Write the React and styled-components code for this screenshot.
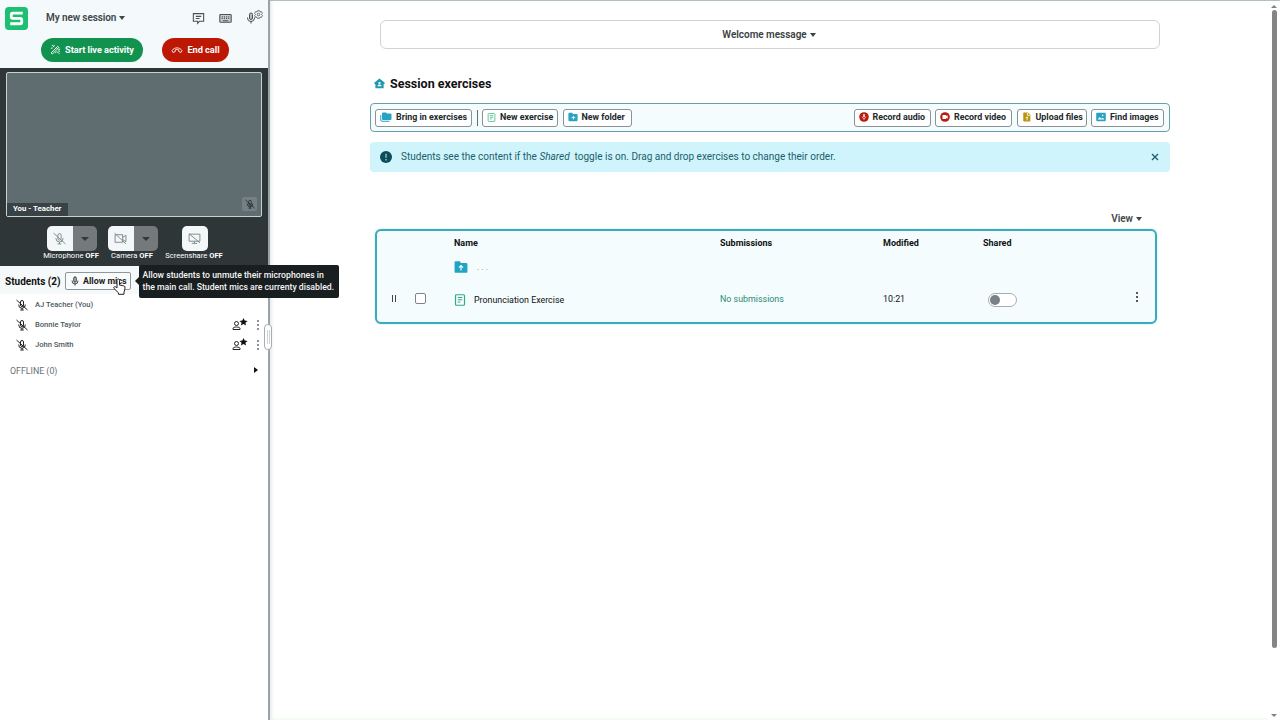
import React from 'react';
import styled, { createGlobalStyle } from 'styled-components';

const GlobalStyle = createGlobalStyle`
  * {
    box-sizing: border-box;
  }

  body {
    margin: 0;
    overflow: hidden;
    background: #fff;
    font-family: Roboto, "Liberation Sans", sans-serif;
    color: #111;
  }

  button {
    font-family: inherit;
    margin: 0;
  }

  svg {
    display: block;
    flex-shrink: 0;
  }
`;

const paths = {
  chat: <path d="M2.500 3h19v14h-7.500l-3.500 4v-4h-8zM7 8h10M7 12h7" />,
  keyboard: (
    <>
      <rect x="1.500" y="4.500" width="21" height="14.500" rx="1.5" fill="#c9cfd0" />
      <path d="M5 9h2M9 9h2M13 9h2M17 9h2M5 12h2M9 12h2M13 12h2M17 12h2M7 16h10" />
    </>
  ),
  mic: (
    <>
      <rect x="9" y="2" width="6" height="13" rx="3" fill="#b5bcbd" />
      <path d="M5 11v1a7 7 0 0 0 14 0v-1M12 19v4" />
    </>
  ),
  micOff: <path d="M12 3a3 3 0 0 0-3 3v6a3 3 0 0 0 6 0V6a3 3 0 0 0-3-3zM5.500 11v1a6.500 6.500 0 0 0 13 0v-1M12 18.500V22M8.500 22h7M1 2l22 20" />,
  gear: (
    <>
      <path d="M9 2h6l1 3 4-.5 2.500 5L20 12l2.500 2.500-2.500 5-4-.5-1 3H9l-1-3-4 .5-2.500-5L4 12 1.500 9.500l2.500-5L8 5z" />
      <circle cx="12" cy="12" r="3.500" />
    </>
  ),
  wand: <path d="M2.500 19.500L17 5l2.500 2.500L5 22zM14 8l2.500 2.500M4 2l5 5M2 9.500l4-1M9.500 2l-1 3M22 11l-4 2M15 16l6 6M12 20l1.500-3M22 16l-4-1" />,
  phone: <path d="M2 13c5-7 15-7 20 0l-2 4-4.500-2v-3.500c-2-.7-5-.7-7 0V15L4 17z" />,
  cameraOff: <path d="M2 5h14v14H2zM16 10l6-4v12l-6-4M1 2l21 20" />,
  screenOff: <path d="M2 4h20v13H2zM12 17v4M7 21h10M2 3l20 17" />,
  home: (
    <>
      <path d="M12 1L1 10v3h2v9.500h18V13h2v-3z" fill="currentColor" stroke="none" />
      <circle cx="12" cy="11" r="2.500" fill="#fff" stroke="none" />
      <path d="M7.500 18c0-5 9-5 9 0z" fill="#fff" stroke="none" />
    </>
  ),
  folders: (
    <>
      <path d="M6 3h6l2 2h7a2 2 0 0 1 2 2v9a2 2 0 0 1-2 2H6a2 2 0 0 1-2-2V5a2 2 0 0 1 2-2z" fill="currentColor" stroke="none" />
      <path d="M1.500 8v10.500a2 2 0 0 0 2 2H19" />
    </>
  ),
  doc: (
    <>
      <rect x="3" y="1.500" width="18" height="21" rx="2" />
      <path d="M7.500 7h9M7.500 11.500h9M7.500 16h5" />
    </>
  ),
  folderPlus: (
    <>
      <path d="M3 2h7l2 3h9a2 2 0 0 1 2 2v13a2 2 0 0 1-2 2H3a2 2 0 0 1-2-2V4a2 2 0 0 1 2-2z" fill="currentColor" stroke="none" />
      <path d="M13 9v9M8.500 13.500h9" stroke="#fff" />
    </>
  ),
  folderUp: (
    <>
      <path d="M3 2h7l2 3h9a2 2 0 0 1 2 2v13a2 2 0 0 1-2 2H3a2 2 0 0 1-2-2V4a2 2 0 0 1 2-2z" fill="currentColor" stroke="none" />
      <path d="M12 18v-8M8.500 13l3.500-3.500 3.500 3.500" stroke="#fff" />
    </>
  ),
  recordAudio: (
    <>
      <circle cx="12" cy="12" r="11.500" fill="currentColor" stroke="none" />
      <rect x="10" y="5" width="4" height="8" rx="2" fill="#fff" stroke="none" />
      <path d="M7.500 11c0 6 9 6 9 0M12 15.500V19" stroke="#fff" strokeWidth="1.500" />
    </>
  ),
  recordVideo: (
    <>
      <circle cx="12" cy="12" r="11.500" fill="currentColor" stroke="none" />
      <path d="M6 7h9v3l3.500-2v8L15 14v3H6z" fill="#fff" stroke="none" />
    </>
  ),
  upload: (
    <>
      <path d="M5 1h9l6 6v14a2 2 0 0 1-2 2H5a2 2 0 0 1-2-2V3a2 2 0 0 1 2-2z" fill="currentColor" stroke="none" />
      <path d="M13 2v6h6M12 20v-8M9 14.500l3-3 3 3" stroke="#fff" />
    </>
  ),
  image: (
    <>
      <rect x="0.500" y="2" width="23" height="20" rx="2" fill="currentColor" stroke="none" />
      <path d="M4 18l5-6 4 4 3-3 4 5z" fill="#fff" stroke="none" />
      <circle cx="16" cy="8" r="2" fill="#fff" stroke="none" />
    </>
  ),
  alert: (
    <>
      <circle cx="12" cy="12" r="12" fill="currentColor" stroke="none" />
      <path d="M12 5.500v8M12 16v3" stroke="#cff4fc" />
    </>
  ),
  close: <path d="M3 3l18 18M21 3L3 21" />,
};

const Icon = ({ name, size = 12, weight = 2, color }) => (
  <svg
    width={size}
    height={size}
    viewBox="0 0 24 24"
    fill="none"
    stroke="currentColor"
    strokeWidth={weight}
    color={color}
  >
    {paths[name]}
  </svg>
);

const Caret = styled.span`
  display: block;
  width: 0;
  height: 0;
  border: ${({ $size }) => $size || 3.5}px solid transparent;
  border-top: ${({ $size }) => $size || 4}px solid currentColor;
  border-bottom: 0;
`;

const Page = styled.div`
  display: flex;
  height: 720px;
  overflow: hidden;
`;

const Sidebar = styled.aside`
  position: relative;
  width: 270px;
  flex-shrink: 0;
  border-right: 2px solid #98a5a8;
  box-shadow: 1px 0 4px rgba(0, 0, 0, 0.12);
`;

const Header = styled.header`
  height: 68px;
  padding: 7px 5px 0;
  background: #f4f9fb;
`;

const TitleRow = styled.div`
  display: flex;
  align-items: center;
  height: 22px;
`;

const Logo = styled.svg`
  width: 23px;
  height: 23px;
`;

const SessionName = styled.div`
  display: flex;
  align-items: center;
  gap: 3px;
  margin-left: 18px;
  font-size: 10px;
  font-weight: 600;
  letter-spacing: -0.1px;
  line-height: 12px;
  color: #3f4749;
`;

const HeaderIcons = styled.div`
  display: flex;
  align-items: center;
  gap: 14px;
  margin-left: auto;
  color: #4a5356;
`;

const MicSettings = styled.div`
  display: flex;
  width: 18px;
  margin-left: -1px;

  svg:last-child {
    margin: -2px 0 0 -3px;
  }
`;

const CallActions = styled.div`
  display: flex;
  gap: 19px;
  margin: 9px 0 0 36px;
`;

const PillButton = styled.button`
  display: flex;
  align-items: center;
  justify-content: center;
  gap: 4px;
  width: ${({ $width }) => $width}px;
  height: 24px;
  padding: 0 0 1px;
  border: 0;
  border-radius: 12px;
  background: ${({ $color }) => $color};
  color: #fff;
  font-size: 9.2px;
  font-weight: 700;
  letter-spacing: -0.03px;
  white-space: nowrap;
`;

const CallPanel = styled.section`
  height: 198px;
  padding: 4px 6px 0;
  background: #2e3637;
`;

const Video = styled.div`
  display: flex;
  align-items: flex-end;
  justify-content: space-between;
  height: 145px;
  border: 1px solid #c8d0d1;
  border-radius: 2px;
  background: #5f6c70;
`;

const VideoLabel = styled.div`
  width: 61px;
  height: 13px;
  padding-left: 6px;
  background: #394244;
  color: #fff;
  font-size: 7.8px;
  font-weight: 700;
  line-height: 12px;
`;

const VideoMuted = styled.div`
  display: grid;
  place-items: center;
  width: 15px;
  height: 14px;
  margin: 0 4px 5px 0;
  border-radius: 2px;
  background: #748085;
  color: #20292b;
`;

const Controls = styled.div`
  display: flex;
  margin: 9px 0 0 34px;
`;

const Control = styled.div`
  display: flex;
  flex-direction: column;
  align-items: center;
  width: ${({ $width }) => $width}px;
  color: #fff;
  font-size: 7.6px;
  line-height: 10px;
  white-space: nowrap;
`;

const ControlButtons = styled.div`
  display: flex;
  height: 25px;
  margin-left: 1px;
  border-radius: 5px;
  overflow: hidden;
`;

const ControlButton = styled.div`
  display: grid;
  place-items: center;
  width: ${({ $menu }) => ($menu ? 24 : 26)}px;
  background: ${({ $menu }) => ($menu ? '#747a7b' : '#f4f7f8')};
  color: ${({ $menu }) => ($menu ? '#303839' : '#798587')};
`;

const StudentsBar = styled.div`
  position: relative;
  display: flex;
  align-items: center;
  gap: 5px;
  height: 28px;
  padding: 2px 0 0 5px;
  background: #f5f9fa;
`;

const StudentsTitle = styled.h2`
  width: 55px;
  margin: 0;
  font-size: 10px;
  font-weight: 700;
  white-space: nowrap;
`;

const AllowButton = styled.button`
  display: flex;
  align-items: center;
  gap: 3px;
  width: 66px;
  height: 18px;
  padding: 0 0 0 4px;
  border: 1px solid #8e989a;
  border-radius: 2px;
  background: #f8fafb;
  color: #222;
  font-size: 8.9px;
  font-weight: 700;
  white-space: nowrap;
`;

const Tooltip = styled.div`
  position: absolute;
  z-index: 3;
  top: -1px;
  left: 139px;
  width: 200px;
  height: 33px;
  padding: 4px 0 0 3.5px;
  border-radius: 2px;
  background: #191e20;
  color: #f5f5f5;
  font-size: 8.7px;
  font-weight: 500;
  line-height: 12px;
  white-space: nowrap;

  &::before {
    content: "";
    position: absolute;
    top: 12px;
    left: -4px;
    border: 4px solid transparent;
    border-right-color: #191e20;
    border-left: 0;
  }
`;

const Cursor = styled.svg`
  position: absolute;
  top: 12px;
  left: 113px;
  width: 13px;
  height: 17px;
`;

const Student = styled.div`
  display: flex;
  align-items: center;
  height: 20px;
  padding: 1px 0 0 16px;
  color: #222;
`;

const StudentName = styled.span`
  margin-left: 7px;
  color: #4b595d;
  font-size: 7.6px;
  font-weight: 500;
  letter-spacing: -0.02px;
`;

const StudentActions = styled.div`
  display: flex;
  align-items: center;
  gap: 9px;
  margin: 0 9px 0 auto;
`;

const Dots = styled.div`
  display: flex;
  flex-direction: column;
  gap: 2px;
  margin-top: ${({ $shift }) => $shift || 0}px;

  span {
    width: 2px;
    height: 2px;
    border-radius: 1px;
    background: ${({ $color }) => $color || '#222'};
  }
`;

const Offline = styled.div`
  display: flex;
  align-items: center;
  justify-content: space-between;
  margin-top: 12px;
  padding: 0 10px;
  color: #667276;
  font-size: 8.8px;
  line-height: 10px;
`;

const RightCaret = styled.span`
  margin-top: -2px;
  border: 3.5px solid transparent;
  border-left: 4px solid #111;
  border-right: 0;
`;

const ResizeHandle = styled.div`
  position: absolute;
  z-index: 2;
  top: 324px;
  right: -4px;
  display: flex;
  align-items: center;
  justify-content: center;
  gap: 1px;
  width: 8px;
  height: 26px;
  border: 1px solid #a4adaf;
  border-radius: 4px;
  background: #fff;

  span {
    width: 1px;
    height: 14px;
    background: #ccd2d3;
  }
`;

const Main = styled.main`
  flex: 1;
  padding: 19px 0 0 100px;
  border-top: 1px solid #b2c0be;
  border-bottom: 2px solid #f3fcf1;
`;

const Content = styled.div`
  width: 800px;
`;

const Welcome = styled.div`
  display: flex;
  align-items: center;
  justify-content: center;
  gap: 3px;
  height: 29px;
  margin: 0 10px;
  padding-right: 2px;
  border: 1px solid #cfd3d4;
  border-radius: 6px;
  color: #3a4244;
  font-size: 10px;
  font-weight: 600;
  letter-spacing: -0.03px;
`;

const SectionTitle = styled.h1`
  display: flex;
  align-items: center;
  gap: 5px;
  height: 15px;
  margin: 27px 0 0 4px;
  font-size: 12.5px;
  font-weight: 700;
`;

const Toolbar = styled.div`
  display: flex;
  align-items: center;
  gap: 4.5px;
  height: 29px;
  margin-top: 12px;
  padding: 0 5px 0 4px;
  border: 1px solid #6b9fa6;
  border-radius: 4px;
  background: #f4fcfe;
`;

const ToolButton = styled.button`
  display: flex;
  align-items: center;
  gap: 4px;
  width: ${({ $width }) => $width}px;
  height: 18px;
  padding: 0 0 1px 4px;
  border: 1px solid #899294;
  border-radius: 3px;
  background: #fff;
  color: #22292b;
  font-size: 8.9px;
  font-weight: 700;
  white-space: nowrap;
`;

const Separator = styled.div`
  width: 1px;
  height: 16px;
  background: #666d70;
`;

const Spacer = styled.div`
  flex: 1;
`;

const Notice = styled.div`
  display: flex;
  align-items: center;
  height: 30px;
  margin-top: 10px;
  padding: 0 11px 1px 10px;
  border-radius: 4px;
  background: #cff4fc;
  color: #205f6b;
  font-size: 10.02px;
  white-space: pre;

  p {
    flex: 1;
    margin: 0 0 0 9px;
  }
`;

const ViewMenu = styled.div`
  display: flex;
  align-items: center;
  justify-content: flex-end;
  gap: 3px;
  margin: 41px 28px 0 0;
  color: #3f4749;
  font-size: 10px;
  font-weight: 600;
  line-height: 12px;
`;

const Table = styled.div`
  width: 782px;
  height: 95px;
  margin: 4px 0 0 5px;
  border: 2px solid #3caabd;
  border-radius: 6px;
  background: #f4fcfe;
  box-shadow: 0 0 2px #a5e2ea;
  font-size: 8.9px;
`;

const Row = styled.div`
  display: grid;
  grid-template-columns: 35px 42px 266px 163px 100px 153px 1fr;
  align-items: center;
  height: ${({ $height }) => $height}px;
  font-size: ${({ $head }) => ($head ? 9 : 8.9)}px;
  font-weight: ${({ $head }) => ($head ? 700 : 400)};
`;

const NameCell = styled.div`
  display: flex;
  align-items: center;
  gap: 8px;
  padding-top: ${({ $drop }) => $drop || 0}px;
`;

const Ellipsis = styled.span`
  padding: 0 0 0 1px;
  color: #888;
  font-size: 9px;
  letter-spacing: 2px;
`;

const Grip = styled.div`
  justify-self: center;
  width: 4px;
  height: 7px;
  margin: -1px 0 0 -2px;
  border: 1px solid #444;
  border-width: 0 1px;
`;

const Checkbox = styled.div`
  width: 11px;
  height: 11px;
  margin: -1px 0 0 3px;
  border: 1px solid #7d8587;
  border-radius: 2px;
  background: #fff;
`;

const Submissions = styled.span`
  color: #2b8a74;
`;

const Toggle = styled.div`
  width: 29px;
  height: 14px;
  margin: 2px 0 0 5px;
  padding: 1px;
  border: 1px solid #a7adae;
  border-radius: 7px;
  background: #fff;

  &::before {
    content: "";
    display: block;
    width: 10px;
    height: 10px;
    border-radius: 5px;
    background: #788284;
  }
`;

const Scrollbar = styled.div`
  display: flex;
  flex-direction: column;
  align-items: center;
  width: 12px;
  padding: 4px 0 3px;
  border-top: 1px solid #b2c0be;
  color: #818181;
`;

const Thumb = styled.div`
  width: 5px;
  height: 638px;
  margin: 2px 0 auto;
  border-radius: 3px;
  background: #858585;
`;

const UpCaret = styled(Caret)`
  transform: rotate(180deg);
`;

const MenuDots = ({ color, shift }) => (
  <Dots $color={color} $shift={shift}>
    <span />
    <span />
    <span />
  </Dots>
);

const StudentRow = ({ name, teacher }) => (
  <Student>
    <Icon name="micOff" size={12} />
    <StudentName>{name}</StudentName>
    {!teacher && (
      <StudentActions>
        <svg width="16" height="14" viewBox="0 0 16 14">
          <g fill="none" stroke="#222">
            <circle cx="4.500" cy="5.500" r="2" />
            <path d="M1 11.500v-1c0-2 7-2 7 0v1z" />
          </g>
          <path d="M11.500 0l1.200 2.600 2.900.3-2.200 1.900.7 2.800-2.600-1.500-2.600 1.500.7-2.800L7.500 2.900l2.800-.3z" fill="#111" />
        </svg>
        <MenuDots color="#657074" />
      </StudentActions>
    )}
  </Student>
);

const DeviceControl = ({ icon, label, width, menu }) => (
  <Control $width={width}>
    <ControlButtons>
      <ControlButton><Icon name={icon} size={13} weight={1.7} /></ControlButton>
      {menu && <ControlButton $menu><Caret $size={4} /></ControlButton>}
    </ControlButtons>
    <span>{label} <b>OFF</b></span>
  </Control>
);

const Tool = ({ icon, color, width, size = 10, children }) => (
  <ToolButton $width={width}>
    <Icon name={icon} size={size} color={color} />
    {children}
  </ToolButton>
);

export default function App() {
  return (
    <Page>
      <GlobalStyle />
      <Sidebar>
        <Header>
          <TitleRow>
            <Logo viewBox="0 0 22 22">
              <rect width="22" height="22" rx="3.500" fill="#1dbf73" />
              <path d="M17 5.800H7.500Q6 5.800 6 7.300v2q0 1.500 1.500 1.500h7q1.500 0 1.500 1.500v2.200q0 1.500-1.500 1.500H5" fill="none" stroke="#fff" strokeWidth="2.700" />
            </Logo>
            <SessionName>My new session <Caret /></SessionName>
            <HeaderIcons>
              <Icon name="chat" size={13} />
              <Icon name="keyboard" size={13} />
              <MicSettings>
                <Icon name="mic" size={12} />
                <Icon name="gear" size={9} weight={2.2} />
              </MicSettings>
            </HeaderIcons>
          </TitleRow>
          <CallActions>
            <PillButton $color="#11934f" $width={102}>
              <Icon name="wand" size={11} weight={2} />Start live activity
            </PillButton>
            <PillButton $color="#bd1804" $width={67}>
              <Icon name="phone" size={12} weight={1.7} />End call
            </PillButton>
          </CallActions>
        </Header>
        <CallPanel>
          <Video>
            <VideoLabel>You - Teacher</VideoLabel>
            <VideoMuted><Icon name="micOff" size={10} /></VideoMuted>
          </Video>
          <Controls>
            <DeviceControl icon="micOff" label="Microphone" width={62} menu />
            <DeviceControl icon="cameraOff" label="Camera" width={60} menu />
            <DeviceControl icon="screenOff" label="Screenshare" width={64} />
          </Controls>
        </CallPanel>
        <StudentsBar>
          <StudentsTitle>Students (2)</StudentsTitle>
          <AllowButton><Icon name="mic" size={10} />Allow mics</AllowButton>
          <Cursor viewBox="0 0 13 17">
            <path d="M4 10V2.500C4 .5 6.500.5 6.500 2.500V7l4 .8q2 .5 1.500 2.500l-1 4v2H5.500v-1.500L1 10.500c-1-1.500 1-2.500 2-1.300z" fill="#fff" stroke="#222" />
          </Cursor>
          <Tooltip>
            Allow students to unmute their microphones in<br />
            the main call. Student mics are currenty disabled.
          </Tooltip>
        </StudentsBar>
        <StudentRow name="AJ Teacher (You)" teacher />
        <StudentRow name="Bonnie Taylor" />
        <StudentRow name="John Smith" />
        <Offline>OFFLINE (0) <RightCaret /></Offline>
        <ResizeHandle><span /><span /></ResizeHandle>
      </Sidebar>
      <Main>
        <Content>
          <Welcome>Welcome message <Caret /></Welcome>
          <SectionTitle><Icon name="home" size={11} color="#2198b0" />Session exercises</SectionTitle>
          <Toolbar>
            <Tool icon="folders" color="#28a2c2" width={97} size={12}>Bring in exercises</Tool>
            <Separator />
            <Tool icon="doc" color="#36b77c" width={76} size={9}>New exercise</Tool>
            <Tool icon="folderPlus" color="#28a2c2" width={69}>New folder</Tool>
            <Spacer />
            <Tool icon="recordAudio" color="#b71c0c" width={77}>Record audio</Tool>
            <Tool icon="recordVideo" color="#b71c0c" width={77}>Record video</Tool>
            <Tool icon="upload" color="#b8960c" width={70}>Upload files</Tool>
            <Tool icon="image" color="#28a2c2" width={73}>Find images</Tool>
          </Toolbar>
          <Notice>
            <Icon name="alert" size={12} color="#0b4c58" />
            <p>Students see the content if the <i>Shared</i>  toggle is on. Drag and drop exercises to change their order.</p>
            <Icon name="close" size={8} weight={4} color="#205f6b" />
          </Notice>
          <ViewMenu>View <Caret /></ViewMenu>
          <Table>
            <Row $height={23} $head>
              <span /><span />
              <span>Name</span>
              <span>Submissions</span>
              <span>Modified</span>
              <span>Shared</span>
            </Row>
            <Row $height={26}>
              <span /><span />
              <NameCell>
                <Icon name="folderUp" size={14} color="#23a3c3" />
                <Ellipsis>...</Ellipsis>
              </NameCell>
            </Row>
            <Row $height={38}>
              <Grip />
              <Checkbox />
              <NameCell $drop={2}>
                <Icon name="doc" size={12} weight={2.4} color="#31ab7c" />
                Pronunciation Exercise
              </NameCell>
              <Submissions>No submissions</Submissions>
              <span>10:21</span>
              <Toggle />
              <MenuDots shift={-5} />
            </Row>
          </Table>
        </Content>
      </Main>
      <Scrollbar>
        <UpCaret $size={3} />
        <Thumb />
        <Caret $size={3} />
      </Scrollbar>
    </Page>
  );
}
